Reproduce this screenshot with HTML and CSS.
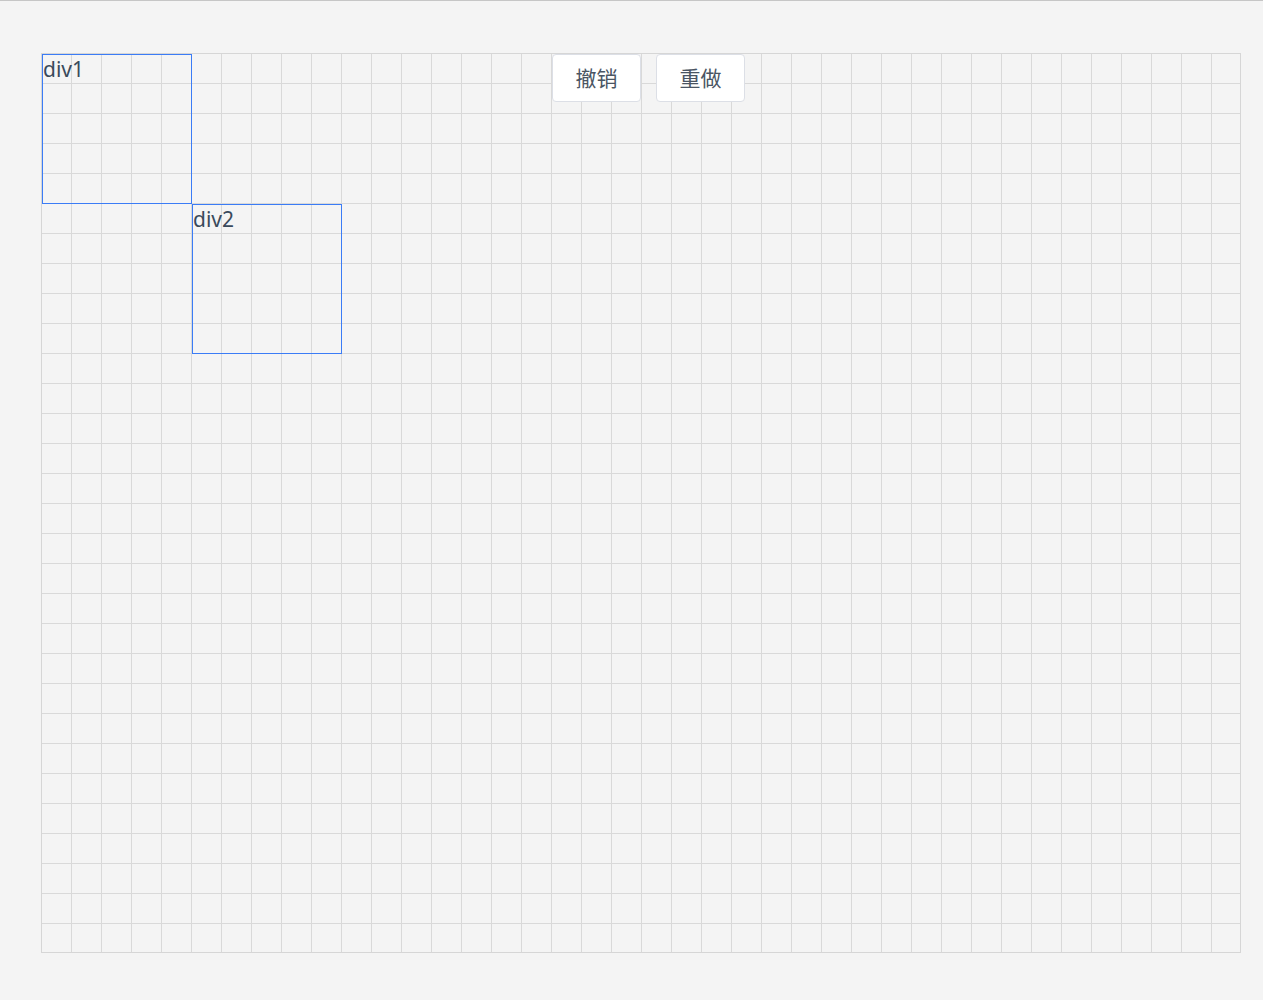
FILE: index.html
```html
<!DOCTYPE html>
<html lang="zh-CN">
<head>
<meta charset="utf-8">
<title>Canvas</title>
<link rel="stylesheet" href="styles.css">
</head>
<body>
<div class="topline"></div>
<div class="page">
  <div class="canvas">
    <div class="node node-1">div1</div>
    <div class="node node-2">div2</div>
    <div class="toolbar">
      <button class="btn">撤销</button>
      <button class="btn">重做</button>
    </div>
  </div>
</div>
</body>
</html>
```
FILE: styles.css
```css
html, body {
  margin: 0;
  padding: 0;
  background: #f4f4f4;
  font-family: "Noto Sans", "Noto Sans CJK SC", sans-serif;
  color: #2c3e50;
}
.topline {
  height: 1px;
  background: #c6c6c6;
}
.page {
  padding: 52px 0 0 41px;
}
.canvas {
  position: relative;
  box-sizing: border-box;
  width: 1200px;
  height: 900px;
  border: 1px solid #d6d6d6;
  background-color: #f4f4f4;
  background-image:
    linear-gradient(to right, transparent 29px, #d9d9d9 29px),
    linear-gradient(to bottom, transparent 29px, #d9d9d9 29px);
  background-size: 30px 30px;
}
.node {
  position: absolute;
  box-sizing: border-box;
  width: 150px;
  height: 150px;
  border: 1px solid #3b7cf6;
  font-size: 21px;
  line-height: 28px;
  color: #3a4a5c;
}
.node-1 { left: 0; top: 0; }
.node-2 { left: 150px; top: 150px; }
.toolbar {
  position: absolute;
  left: 510px;
  top: 0;
  display: flex;
  gap: 15px;
}
.btn {
  box-sizing: border-box;
  width: 89px;
  height: 48px;
  padding: 0 0 2px;
  border: 1px solid #dcdfe6;
  border-radius: 4px;
  background: #fff;
  color: #4a5563;
  font-family: "Noto Sans CJK SC", sans-serif;
  font-size: 21px;
  line-height: 44px;
}
```
